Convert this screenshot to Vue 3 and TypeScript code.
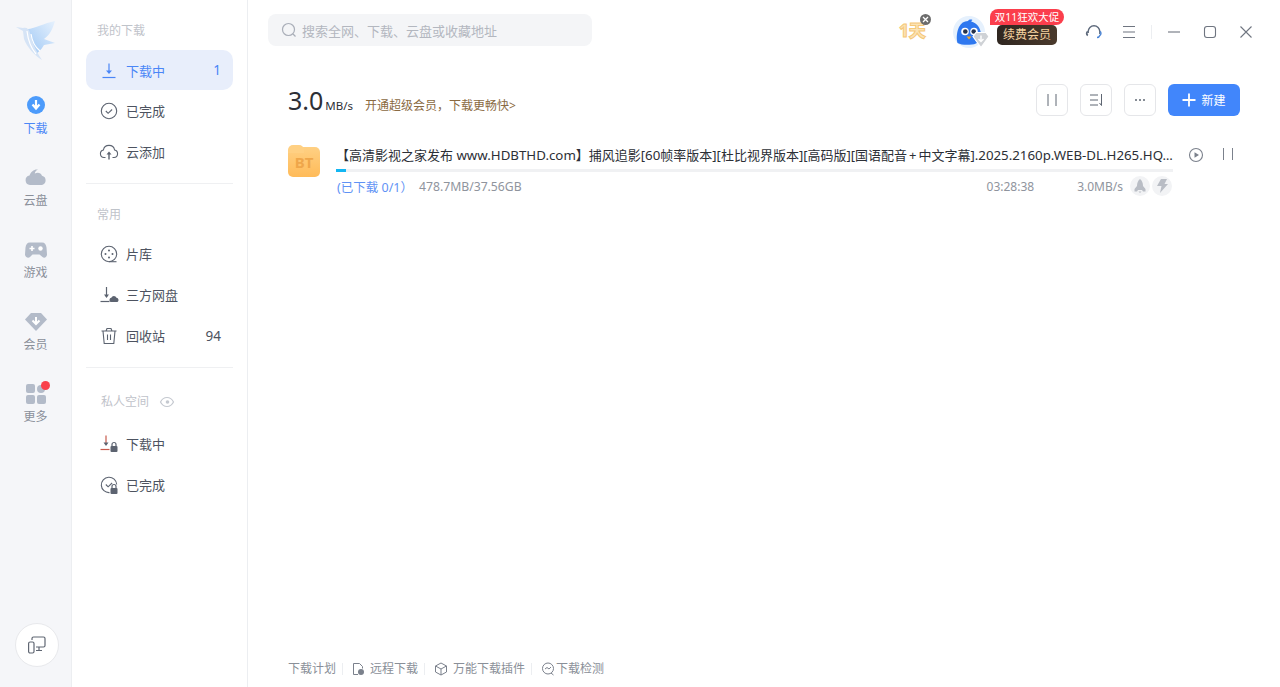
<script setup lang="ts">
const rail = [
  { label: '下载', key: 'dl', active: true },
  { label: '云盘', key: 'cloud' },
  { label: '游戏', key: 'game' },
  { label: '会员', key: 'vip' },
  { label: '更多', key: 'more' },
]
</script>

<template>
  <div class="app">
    <aside class="rail">
      <svg class="logo" width="42" height="42" viewBox="0 0 42 42">
        <defs>
          <linearGradient id="wing" x1="1" y1="0" x2="0" y2="1">
            <stop offset="0" stop-color="#e6f1fd" />
            <stop offset="1" stop-color="#9fc8f5" />
          </linearGradient>
        </defs>
        <path d="M13 9C18 9 30 3 40 1 38 8 35 15 29 19L40 23 29 25C26 30 23 33 20 34L15 20Z" fill="url(#wing)" />
        <path d="M1 7 8 8C12 7 14 9 15 13 17 21 19 28 27 40 19 35 12 27 9 19L8 11Z" fill="#d6e4f6" />
        <path d="M12 11C13 20 16 28 21 34M16 14C17 21 20 27 25 31" fill="none" stroke="#fff" stroke-width="1.200" />
      </svg>
      <nav class="rail-nav">
        <div v-for="r in rail" :key="r.key" class="rail-item" :class="{ on: r.active }">
          <svg width="24" height="24" viewBox="0 0 24 24">
            <template v-if="r.key === 'dl'">
              <circle cx="12" cy="12" r="9" fill="#4c9bfb" />
              <path d="M12 7v8M8.500 11.500 12 15.500l3.500-4" fill="none" stroke="#fff" stroke-width="2.200" />
            </template>
            <path v-else-if="r.key === 'cloud'" d="M6 20a4.800 4.800 0 0 1-.5-9.500C7 6.500 10 4 14 4.500c-2 1-3 2.200-3.200 4 3.200-1.500 6.200-.5 7.200 2.200A4.800 4.800 0 0 1 18 20Z" fill="#b3bbc9" />
            <g v-else-if="r.key === 'game'" transform="translate(0 1.500)">
              <path d="M6 4h12c3 0 4 2 4.500 5l.5 7c0 3-3 4-4.500 2.500L15.500 16h-7l-2.500 2.500C4.500 20 1 19 1 16l.5-7C2 6 3 4 6 4Z" fill="#b3bbc9" />
              <path d="M5.500 10h5M8 7.500v5" stroke="#fff" stroke-width="1.600" />
              <circle cx="16.500" cy="10" r="2.200" fill="#fff" />
            </g>
            <g v-else-if="r.key === 'vip'" transform="translate(0 1)">
              <path d="M7 3h10l6 6.500L12 21 1 9.500Z" fill="#b3bbc9" />
              <path d="M12 7v6M8.500 10.500 12 14l3.500-3.500" fill="none" stroke="#fff" stroke-width="2" />
            </g>
            <template v-else>
              <rect x="2" y="3" width="9" height="9" rx="2" fill="#b3bbc9" />
              <rect x="2" y="14" width="9" height="9" rx="2" fill="#b3bbc9" />
              <rect x="13" y="14" width="9" height="9" rx="2" fill="#b3bbc9" />
              <circle cx="17" cy="8" r="4" fill="#b3bbc9" />
            </template>
          </svg>
          <i v-if="r.key === 'more'" class="dot"></i>
          <span>{{ r.label }}</span>
        </div>
      </nav>
      <div class="device">
        <svg width="20" height="20" viewBox="0 0 20 20" fill="none" stroke="#5f6672" stroke-width="1.200">
          <path d="M5 5V3.500A1.500 1.500 0 0 1 6.500 2h10A1.500 1.500 0 0 1 18 3.500v7a1.500 1.500 0 0 1-1.500 1.500H9" />
          <rect x="1.600" y="7" width="5.400" height="11" rx="1.500" />
          <path d="M12 12v3M9 15.500h6" />
        </svg>
      </div>
    </aside>

    <aside class="side">
      <div class="side-head first">我的下载</div>
      <div class="side-item active">
        <svg width="20" height="20" viewBox="0 0 20 20" fill="none" stroke="#4a86f7"><path d="M10 3.500V13" stroke-width="1.200" /><path d="M7 10.500h6L10 14Z" fill="#4a86f7" stroke="none" /><path d="M3.500 17.500h13" stroke-width="1.200" /></svg>
        <span>下载中</span><b>1</b>
      </div>
      <div class="side-item">
        <svg width="20" height="20" viewBox="0 0 20 20" fill="none" stroke="#5c6370" stroke-width="1.100"><circle cx="10" cy="10" r="7.700" /><path d="m6.800 10 2.300 2.300 4-3.800" /></svg>
        <span>已完成</span>
      </div>
      <div class="side-item">
        <svg width="20" height="20" viewBox="0 0 20 20" fill="none" stroke="#5c6370" stroke-width="1.100"><path d="M6.500 15.500H5a3.800 3.800 0 0 1-.6-7.500 5.700 5.700 0 0 1 11.200 0 3.800 3.800 0 0 1-.6 7.500h-1.500" /><path d="M10 17.500V11" stroke-width="1.400" /><path d="M7.500 12.500 10 9.500l2.500 3Z" fill="#5c6370" stroke="none" /></svg>
        <span>云添加</span>
      </div>
      <hr />
      <div class="side-head common">常用</div>
      <div class="side-item">
        <svg width="20" height="20" viewBox="0 0 20 20" fill="none" stroke="#5c6370" stroke-width="1.100"><circle cx="10" cy="10" r="7.700" /><path d="M10 17.700h7.500" /><g fill="#5c6370" stroke="none"><circle cx="10" cy="6.500" r="1" /><circle cx="6.500" cy="10" r="1" /><circle cx="13.500" cy="10" r="1" /><circle cx="10" cy="13.500" r="1" /></g></svg>
        <span>片库</span>
      </div>
      <div class="side-item">
        <svg width="20" height="20" viewBox="0 0 20 20" fill="none" stroke="#5c6370" stroke-width="1.200"><path d="M7.500 2v10" /><path d="M5 9.500h5L7.500 13Z" fill="#5c6370" stroke="none" /><path d="M1.500 16.500h9" /><path d="M11.500 17a2.300 2.300 0 0 1 .8-4.200 2.800 2.800 0 0 1 5.200 0 2.300 2.300 0 0 1 1 4.200Z" fill="#5c6370" stroke="none" /></svg>
        <span>三方网盘</span>
      </div>
      <div class="side-item">
        <svg width="20" height="20" viewBox="0 0 20 20" fill="none" stroke="#5c6370" stroke-width="1.100"><path d="M2.500 5h15M7 5 8 2.500h4L13 5M4 5l1.200 12.500h9.600L16 5M8.500 8.500v5.500M11.500 8.500v5.500" /></svg>
        <span>回收站</span><b>94</b>
      </div>
      <hr />
      <div class="side-head private">
        私人空间
        <svg width="16" height="16" viewBox="0 0 16 16" fill="none" stroke="#c5c9d0" stroke-width="1.200"><path d="M1.500 8C3 5 5.300 3.500 8 3.500S13 5 14.500 8C13 11 10.700 12.500 8 12.500S3 11 1.500 8Z" /><circle cx="8.500" cy="8" r="1.800" fill="#c5c9d0" stroke="none" /></svg>
      </div>
      <div class="side-item">
        <svg width="20" height="20" viewBox="0 0 20 20" fill="none" stroke="#5c6370" stroke-width="1.200"><path d="M7 1.500v9" stroke="#c65a4c" /><path d="M4.500 8.500h5L7 12Z" fill="#5c6370" stroke="none" /><path d="M1.500 15.500h9" stroke="#c65a4c" /><rect x="11.500" y="12" width="7" height="6" rx="1" fill="#5c6370" stroke="none" /><path d="M13 12v-1.500a2 2 0 0 1 4 0V12" /></svg>
        <span>下载中</span>
      </div>
      <div class="side-item">
        <svg width="20" height="20" viewBox="0 0 20 20" fill="none" stroke="#5c6370" stroke-width="1.100"><path d="M10.500 17.600A7.700 7.700 0 1 1 17.700 9.500" /><path d="m6.800 9.500 2.300 2.300 4-3.800" /><rect x="11.500" y="13" width="7" height="6" rx="1" fill="#5c6370" stroke="none" /><path d="M13 13v-1.500a2 2 0 0 1 4 0V13" stroke-width="1.200" /></svg>
        <span>已完成</span>
      </div>
    </aside>

    <main class="main">
      <header class="top">
        <div class="search">
          <svg width="16" height="16" viewBox="0 0 16 16" fill="none" stroke="#a9aeb8" stroke-width="1.200"><circle cx="7.500" cy="7.500" r="6" /><path d="m12 12 2.500 2.500" /></svg>
          <span>搜索全网、下载、云盘或收藏地址</span>
        </div>
        <div class="top-right">
          <div class="oneday">
            <span>1天</span>
            <i class="close-dot">
              <svg width="7" height="7" viewBox="0 0 7 7" stroke="#fff" stroke-width="1.300"><path d="m1 1 5 5M6 1 1 6" /></svg>
            </i>
          </div>
          <div class="avatar">
            <svg width="32" height="32" viewBox="0 0 32 32">
              <circle cx="16" cy="16" r="16" fill="#e6f1fd" />
              <path d="M4.500 27C3 22 4 15 6 11 8 7 11 5 15 5c1-1.500 3-1.800 4.500-1-.8.500-1.200 1-1.300 1.500C24 7 27.500 12 28 18c.5 6-3 10-9 10.500-5 .5-11 .5-14.500-1.500Z" fill="#2f78ef" />
              <circle cx="12" cy="15.500" r="3.800" fill="#fff" /><circle cx="21" cy="15.500" r="3.800" fill="#fff" />
              <circle cx="12.300" cy="15.500" r="2.300" fill="#26324a" /><circle cx="20.700" cy="15.500" r="2.300" fill="#26324a" />
              <path d="M13.500 20.500h5L16 23.500Z" fill="#f5a623" />
            </svg>
            <svg class="av-badge" width="18" height="18" viewBox="0 0 18 18">
              <path d="M4 1.500h10l3 4-8 11-8-11Z" fill="#cfd2d6" stroke="#fff" stroke-width="1.200" />
              <path d="M9 4.500v6M6.500 8 9 10.500 11.500 8" fill="none" stroke="#fff" stroke-width="1.400" />
            </svg>
          </div>
          <div class="renew">
            <span class="renew-tag">双11狂欢大促</span>
            <span class="renew-btn">续费会员</span>
          </div>
          <svg class="tool headset" width="18" height="18" viewBox="0 0 18 18" fill="none" stroke="#5e6a7c" stroke-width="1.400"><path d="M3.200 10V8.500a5.800 5.800 0 0 1 11.600 0V11" /><path d="M2.800 8.500c-1.300.5-1.600 3 0 4" stroke-width="1.800" /><path d="M15 8.500c1.300.5 1.300 3 0 3.800-.5 1.500-1.500 2.200-3 2.200" stroke="#4d86d6" /></svg>
          <svg class="tool menu" width="16" height="14" viewBox="0 0 16 14" stroke="#6f7580" stroke-width="1.100"><path d="M2 1.500h12M2 7h12M2 12.500h12" /></svg>
          <i class="sep"></i>
          <svg class="tool min" width="14" height="14" viewBox="0 0 14 14" stroke="#6f7580" stroke-width="1.100"><path d="M1 7h12" /></svg>
          <svg class="tool max" width="14" height="14" viewBox="0 0 14 14" fill="none" stroke="#6f7580" stroke-width="1.100"><rect x="1.500" y="1.500" width="11" height="11" rx="2.500" /></svg>
          <svg class="tool x" width="14" height="14" viewBox="0 0 14 14" stroke="#6f7580" stroke-width="1.100"><path d="m1.500 1.500 11 11M12.500 1.500l-11 11" /></svg>
        </div>
      </header>

      <div class="content">
        <section class="speed-row">
          <div class="speed">
            <strong>3.0</strong><small>MB/s</small>
            <span class="promo">开通超级会员，下载更畅快&gt;</span>
          </div>
          <div class="actions">
            <button class="btn">
              <svg width="12" height="14" viewBox="0 0 12 14" stroke="#5e6672"><path d="M2 1v12M10 1v12" /></svg>
            </button>
            <button class="btn">
              <svg width="14" height="14" viewBox="0 0 14 14" fill="none" stroke="#5e6672"><path d="M1 2h8M1 7h8M1 12h8M12.500 1v11.500l-2-2.500" /></svg>
            </button>
            <button class="btn">
              <svg width="12" height="4" viewBox="0 0 12 4" fill="#5e6672"><circle cx="2" cy="2" r="1" /><circle cx="6" cy="2" r="1" /><circle cx="10" cy="2" r="1" /></svg>
            </button>
            <button class="new">
              <svg width="14" height="14" viewBox="0 0 14 14" stroke="#fff" stroke-width="1.800"><path d="M7 .5v13M.5 7h13" /></svg>
              新建
            </button>
          </div>
        </section>

        <section class="task">
          <div class="bt"><span>BT</span></div>
          <div class="task-body">
            <div class="title">【高清影视之家发布 <span class="lat">www.HDBTHD.com</span>】捕风追影[<span class="lat">60</span>帧率版本][杜比视界版本][高码版][国语配音<span class="plus">+</span>中文字幕]<span class="lat">.2025.2160p.WEB-DL.H265.HQ.60fps.DV.HDR</span></div>
            <div class="bar"><i></i></div>
            <div class="meta">
              <span class="done">(已下载 0/1）</span>
              <span class="size">478.7MB/37.56GB</span>
              <span class="time">03:28:38</span>
              <span class="rate">3.0MB/s</span>
              <i class="round">
                <svg width="12" height="14" viewBox="0 0 12 14" fill="#b9bdc5"><path d="M6 0c2 1.500 3 4 3 7l2.500 3v2.500H9L8 11H4l-1 1.500H.5V10L3 7c0-3 1-5.500 3-7Z" /><path d="M4.500 12.500h3L6 14Z" /></svg>
              </i>
              <i class="round">
                <svg width="11" height="14" viewBox="0 0 11 14" fill="#b9bdc5"><path d="M4 0h6L7.500 5H11L3 14l1.500-7H0Z" /></svg>
              </i>
            </div>
          </div>
          <div class="task-ops">
            <svg width="16" height="16" viewBox="0 0 16 16" fill="none" stroke="#7b818c" stroke-width="1.100"><circle cx="8" cy="8" r="6.500" /><path d="M6.500 5.200v5.600L11 8Z" fill="#7b818c" stroke="none" /></svg>
            <svg width="12" height="14" viewBox="0 0 12 14" stroke="#7b818c"><path d="M1.500 1v12M10.500 1v12" /></svg>
          </div>
        </section>

        <footer class="foot">
          <span>下载计划</span><i></i>
          <span>
            <svg width="13" height="14" viewBox="0 0 13 14" fill="none" stroke="#7b818c"><path d="M6 12.500H1.500v-11h6l3 3v2" /><circle cx="9" cy="10" r="3" fill="#7b818c" stroke="none" /></svg>
            远程下载
          </span><i></i>
          <span>
            <svg width="14" height="14" viewBox="0 0 14 14" fill="none" stroke="#7b818c"><path d="M7 1 12.500 4v6L7 13 1.500 10V4ZM1.500 4 7 7l5.500-3M7 7v6" /></svg>
            万能下载插件
          </span><i></i>
          <span class="tight">
            <svg width="14" height="14" viewBox="0 0 14 14" fill="none" stroke="#7b818c"><circle cx="7" cy="6.500" r="5.500" /><path d="m4 7 2-1.500L8 7l2-2M10 11l2.500 2" /></svg>
            下载检测
          </span>
        </footer>
      </div>
    </main>
  </div>
</template>

<style>
html, body { margin: 0; height: 100%; background: #fff; overflow: hidden; }
</style>

<style scoped>
.app {
  display: flex;
  width: 1280px;
  height: 687px;
  overflow: hidden;
  font-family: "Noto Sans", "Noto Sans CJK SC", sans-serif;
  font-size: 13px;
  color: #4d5360;
}
.rail {
  width: 71px;
  flex: none;
  display: flex;
  flex-direction: column;
  align-items: center;
  background: #f5f6f9;
  border-right: 1px solid #eceef1;
}
.logo { margin-top: 20px; margin-left: 1px; }
.rail-nav { margin-top: 31px; display: flex; flex-direction: column; gap: 16px; flex: 1; }
.rail-item {
  position: relative;
  width: 56px;
  height: 56px;
  display: flex;
  flex-direction: column;
  align-items: center;
  font-size: 12px;
  line-height: 18px;
  color: #8a8f99;
}
.rail-item svg { margin-bottom: 3px; }
.rail-item.on { color: #4b87f7; }
.dot {
  position: absolute;
  left: 33px;
  top: 0;
  width: 9px;
  height: 9px;
  border-radius: 50%;
  background: #f9414c;
}
.device {
  width: 42px;
  height: 42px;
  margin: 0 0 20px 2px;
  display: flex;
  align-items: center;
  justify-content: center;
  border-radius: 50%;
  background: #fff;
  border: 1px solid #e8e9ec;
}
.side {
  width: 176px;
  flex: none;
  box-sizing: border-box;
  padding: 0 14px;
  border-right: 1px solid #eceef1;
  display: flex;
  flex-direction: column;
}
.side-head {
  font-size: 12px;
  line-height: 18px;
  color: #bfc3ca;
  padding-left: 11px;
  display: flex;
  align-items: center;
  gap: 10px;
}
.side-head.first { margin-top: 22px; margin-bottom: 10px; }
.side-head.common { margin-top: 22px; margin-bottom: 10px; }
.side-head.private { padding-left: 15px; margin-top: 25px; margin-bottom: 13px; }
.side-item {
  height: 41px;
  flex: none;
  box-sizing: border-box;
  padding: 0 12px 2px 13px;
  display: flex;
  align-items: center;
  gap: 7px;
  font-size: 13px;
  color: #4d5360;
}
.side-item span { flex: 1; }
.side-item b { font-weight: 400; font-size: 13.500px; }
.side-item.active {
  height: 40px;
  padding-bottom: 0;
  margin-bottom: 1px;
  border-radius: 10px;
  background: #e8eefb;
  color: #4a86f7;
}
.side hr {
  width: 100%;
  margin: 10px 0 0;
  border: 0;
  border-top: 1px solid #eff0f2;
}
.main { flex: 1; min-width: 0; display: flex; flex-direction: column; padding: 14px 20px 0; box-sizing: border-box; }
.top { display: flex; justify-content: space-between; height: 32px; }
.search {
  width: 324px;
  height: 32px;
  box-sizing: border-box;
  padding-left: 13px;
  display: flex;
  align-items: center;
  gap: 5px;
  border-radius: 8px;
  background: #f4f5f7;
  color: #b3b7bf;
  font-size: 13px;
}
.top-right { display: flex; align-items: center; padding-top: 4px; box-sizing: border-box; }
.oneday { position: relative; width: 30px; height: 22px; margin-top: -2px; }
.oneday span {
  font: 800 17px/22px "Noto Sans", "Noto Sans CJK SC", sans-serif;
  color: #fbe3b5;
  -webkit-text-stroke: 1px #f5c878;
  white-space: nowrap;
}
.close-dot {
  position: absolute;
  left: 21px;
  top: -6px;
  width: 11px;
  height: 11px;
  border-radius: 50%;
  background: #6c6c6c;
  display: flex;
  align-items: center;
  justify-content: center;
}
.avatar { position: relative; width: 32px; height: 32px; margin-left: 24px; }
.av-badge { position: absolute; right: -5px; bottom: -1px; }
.renew { position: relative; width: 60px; height: 23px; margin: 2px 0 0 12px; }
.renew-btn {
  display: block;
  height: 20px;
  margin-top: 3px;
  width: 60px;
  border-radius: 5px;
  background: linear-gradient(90deg, #2f2620, #4a3a2c);
  color: #f5d3a0;
  font-size: 12px;
  line-height: 20px;
  text-align: center;
}
.renew-tag {
  position: absolute;
  left: -7px;
  top: -13px;
  width: 74px;
  height: 16px;
  border-radius: 8px 8px 8px 0;
  background: #fb3e4c;
  color: #fff;
  font-size: 10.500px;
  line-height: 16px;
  text-align: center;
  white-space: nowrap;
}
.tool { flex: none; }
.headset { margin-left: 28px; }
.menu { margin-left: 18px; }
.sep { width: 1px; height: 14px; margin: 0 15px 0 14px; background: #eceef1; }
.max { margin-left: 22px; }
.x { margin-left: 22px; margin-right: 7px; }
.content { flex: 1; display: flex; flex-direction: column; padding: 0 20px; min-height: 0; }
.speed-row { display: flex; justify-content: space-between; align-items: center; margin-top: 38px; height: 32px; }
.speed { display: flex; align-items: baseline; color: #2c2f36; }
.speed strong { font-weight: 400; font-size: 25px; line-height: 32px; }
.speed small { font-size: 11.500px; margin-left: 2px; }
.promo { margin-left: 12px; color: #8a6a42; font-size: 12px; }
.actions { display: flex; gap: 12px; }
.btn {
  width: 32px;
  height: 32px;
  padding: 0;
  display: flex;
  align-items: center;
  justify-content: center;
  background: #fff;
  border: 1px solid #e5e6e9;
  border-radius: 6px;
}
.new {
  width: 72px;
  height: 32px;
  display: flex;
  align-items: center;
  justify-content: center;
  gap: 5px;
  border: 0;
  padding: 0;
  border-radius: 6px;
  background: #4186fb;
  color: #fff;
  font: 12px "Noto Sans", "Noto Sans CJK SC", sans-serif;
}
.task { display: flex; margin-top: 29px; margin-right: -6px; }
.bt {
  width: 32px;
  height: 30px;
  margin-top: 2px;
  flex: none;
  position: relative;
  border-radius: 5px;
  background: linear-gradient(#ffd083, #ffbb59);
  display: flex;
  align-items: center;
  justify-content: center;
}
.bt::before {
  content: "";
  position: absolute;
  left: 0;
  top: -2px;
  width: 16px;
  height: 8px;
  border-radius: 5px 5px 0 0;
  background: #ffd083;
}
.bt span { position: relative; color: #efa64a; font-size: 15px; font-weight: 700; }
.task-body { margin-left: 16px; width: 837px; min-width: 0; }
.title {
  font-size: 13px;
  line-height: 20px;
  color: #2c2f36;
  white-space: nowrap;
  overflow: hidden;
  text-overflow: ellipsis;
}
.lat { font-size: 13.300px; }
.plus { font-size: 13px; margin: 0 2px; }
.bar { height: 3px; margin-top: 4px; background: #f0f1f3; }
.bar i { display: block; width: 10px; height: 3px; background: #13b6f2; }
.meta { display: flex; align-items: center; height: 22px; margin-top: 3px; margin-right: 1px; font-size: 12px; color: #8f949d; }
.done { color: #5f92f5; width: 83px; padding-left: 1px; box-sizing: border-box; white-space: nowrap; font-size: 12.500px; }
.size { flex: 1; font-size: 12.200px; }
.time { margin-right: 43px; }
.rate { margin-right: 5px; }
.round {
  width: 20px;
  height: 20px;
  margin-left: 2px;
  border-radius: 50%;
  background: #f2f3f5;
  display: flex;
  align-items: center;
  justify-content: center;
}
.task-ops { display: flex; align-items: flex-start; gap: 18px; margin-left: 15px; margin-top: 2px; }
.foot {
  margin-top: auto;
  height: 27px;
  display: flex;
  align-items: flex-start;
  font-size: 12px;
  color: #8a8f98;
}
.foot span { display: flex; align-items: center; gap: 5px; line-height: 18px; }
.foot span.tight { gap: 1px; }
.foot svg { flex: none; }
.foot i { width: 1px; height: 12px; margin: 3px 9px 0 6px; background: #eceef1; }
</style>
